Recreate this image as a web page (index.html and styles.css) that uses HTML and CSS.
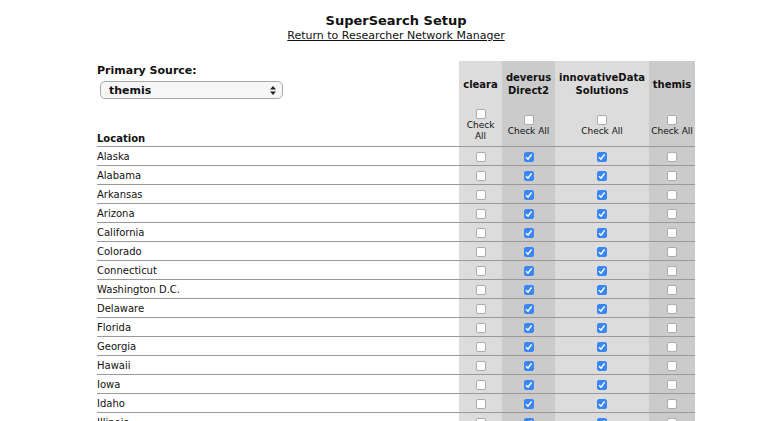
FILE: index.html
```html
<!DOCTYPE html>
<html lang="en">
<head>
    <meta charset="UTF-8">
    <title>SuperSearch Setup</title>
    <link rel="stylesheet" href="styles.css">
</head>
<body>
    <div class="header">
        <h1>SuperSearch Setup</h1>
        <a href="#">Return to Researcher Network Manager</a>
    </div>
    <div class="page">
        <table class="sources">
            <colgroup>
                <col class="col-location">
                <col class="col-cleara">
                <col class="col-deverus">
                <col class="col-innovative">
                <col class="col-themis">
            </colgroup>
            <thead>
                <tr class="names">
                    <th class="primary">
                        <label for="primary">Primary Source:</label>
                        <select id="primary">
                            <option>themis</option>
                        </select>
                    </th>
                    <th class="light">cleara</th>
                    <th class="dark">deverus<br>Direct2</th>
                    <th class="light">innovativeData<br>Solutions</th>
                    <th class="dark">themis</th>
                </tr>
                <tr class="check-all">
                    <th class="location">Location</th>
                    <th class="light narrow"><input type="checkbox"><br>Check All</th>
                    <th class="dark"><input type="checkbox"><br>Check All</th>
                    <th class="light"><input type="checkbox"><br>Check All</th>
                    <th class="dark"><input type="checkbox"><br>Check All</th>
                </tr>
            </thead>
            <tbody></tbody>
        </table>
    </div>
    <script>
        const states = ['Alaska', 'Alabama', 'Arkansas', 'Arizona', 'California', 'Colorado',
            'Connecticut', 'Washington D.C.', 'Delaware', 'Florida', 'Georgia', 'Hawaii',
            'Iowa', 'Idaho', 'Illinois', 'Indiana', 'Kansas', 'Kentucky'];

        let html = '';
        for (let i = 0; i < states.length; i++) {
            html += `
                <tr>
                    <td>${states[i]}</td>
                    <td class="light"><input type="checkbox"></td>
                    <td class="dark"><input type="checkbox" checked></td>
                    <td class="light"><input type="checkbox" checked></td>
                    <td class="dark"><input type="checkbox"></td>
                </tr>
            `
        }
        document.querySelector('.sources tbody').innerHTML = html
    </script>
</body>
</html>
```

FILE: styles.css
```css
* {
    margin: 0;
    padding: 0;
    box-sizing: border-box;
}
body {
    font-family: 'DejaVu Sans', Verdana, sans-serif;
    font-size: 10px;
    color: #111;
    background: #fff;
}
.header {
    width: 598px;
    margin-left: 97px;
    padding-top: 13px;
    text-align: center;
}
.header h1 {
    font-size: 13px;
    line-height: 16px;
    font-weight: bold;
}
.header a {
    font-size: 11px;
    line-height: 14px;
    color: #111;
}
.page {
    width: 598px;
    margin-left: 97px;
    margin-top: 18px;
}
.sources {
    width: 100%;
    table-layout: fixed;
    border-collapse: collapse;
}
.col-location { width: 362px; }
.col-cleara { width: 43px; }
.col-deverus { width: 53px; }
.col-innovative { width: 94px; }
.col-themis { width: 46px; }
.light {
    background: #dcdcdc;
}
.dark {
    background: #cbcbcb;
}
.sources th {
    font-weight: bold;
    text-align: center;
    vertical-align: middle;
}
.names th {
    height: 45px;
    font-size: 10px;
    line-height: 13px;
    padding-top: 1px;
}
.names th.primary {
    text-align: left;
    vertical-align: top;
    padding-top: 3px;
}
.primary label {
    display: block;
    font-size: 11px;
    line-height: 14px;
    margin-bottom: 3px;
}
.primary select {
    appearance: none;
    display: block;
    width: 183px;
    height: 18px;
    margin-left: 3px;
    padding: 0 18px 0 8px;
    font-family: inherit;
    font-size: 11px;
    font-weight: bold;
    color: #111;
    border: 1px solid #a9a9a9;
    border-radius: 5px;
    background: #f6f6f6 url("data:image/svg+xml;utf8,<svg xmlns='http://www.w3.org/2000/svg' width='6' height='9'><path d='M3 0L6 3.5H0z M3 9L6 5.5H0z' fill='%23222'/></svg>") no-repeat right 6px center;
}
.check-all th {
    height: 40px;
    font-size: 9px;
    line-height: 11px;
    font-weight: normal;
    border-bottom: 1px solid #999;
    padding: 0 1px;
}
.check-all th.narrow {
    padding: 0 4px;
}
.check-all th.location {
    text-align: left;
    vertical-align: bottom;
    font-size: 10px;
    font-weight: bold;
    line-height: 13px;
    padding: 0 0 1px;
}
.check-all input {
    margin-bottom: 1px;
}
.sources td {
    height: 19px;
    padding: 2px 0 0;
    line-height: 12px;
    border-bottom: 1px solid #999;
    text-align: center;
    vertical-align: middle;
}
.sources td:first-child {
    text-align: left;
}
input[type="checkbox"] {
    appearance: none;
    display: inline-block;
    width: 10px;
    height: 10px;
    vertical-align: middle;
    border: 1px solid #acacac;
    border-radius: 2px;
    background: #fff;
}
input[type="checkbox"]:checked {
    border-color: #3a86f4;
    background: #3a86f4 url("data:image/svg+xml;utf8,<svg xmlns='http://www.w3.org/2000/svg' width='10' height='10'><path d='M2 5.2L4 7.2L7.6 2.4' fill='none' stroke='white' stroke-width='1.5'/></svg>") no-repeat center;
}
```
